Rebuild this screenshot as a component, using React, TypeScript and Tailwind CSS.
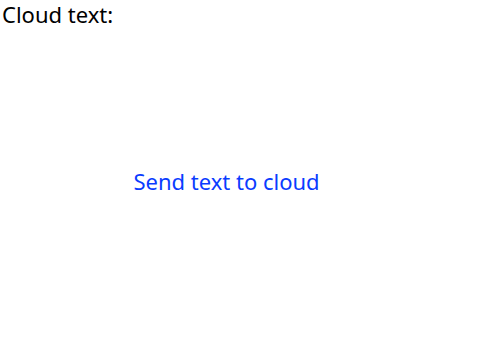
export default function App() {
    return (
        <div className="flex h-[360px] w-[480px] flex-col bg-white font-['Noto_Sans',sans-serif] text-black">
            <div className="px-[2px] text-[22px] leading-[28px]">Cloud text:</div>
            <div className="flex flex-1 items-center justify-center pr-[27px] pb-[26px]">
                <button className="text-[22px] leading-[30px] text-[#0a3cff]">Send text to cloud</button>
            </div>
        </div>
    );
}
